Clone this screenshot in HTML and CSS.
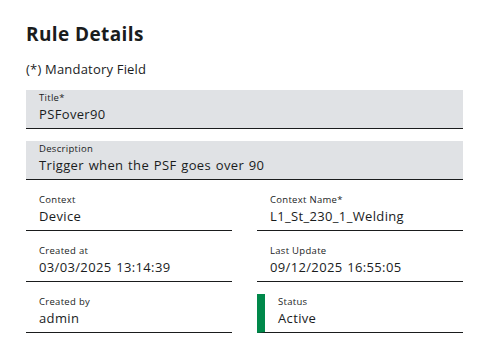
FILE: index.html
```html
<!DOCTYPE html>
<html lang="en">
<head>
    <meta charset="UTF-8">
    <meta name="viewport" content="width=device-width, initial-scale=1.0">
    <title>Rule Details</title>
    <link rel="stylesheet" href="styles.css">
</head>
<body>
    <div class="page">
        <h2>Rule Details</h2>
        <p class="hint">(*) Mandatory Field</p>

        <div class="field filled">
            <span class="label">Title*</span>
            <span class="value">PSFover90</span>
        </div>
        <div class="field filled">
            <span class="label">Description</span>
            <span class="value">Trigger when the PSF goes over 90</span>
        </div>

        <div class="grid">
            <div class="field">
                <span class="label">Context</span>
                <span class="value">Device</span>
            </div>
            <div class="field">
                <span class="label">Context Name*</span>
                <span class="value">L1_St_230_1_Welding</span>
            </div>
            <div class="field">
                <span class="label">Created at</span>
                <span class="value">03/03/2025 13:14:39</span>
            </div>
            <div class="field">
                <span class="label">Last Update</span>
                <span class="value">09/12/2025 16:55:05</span>
            </div>
            <div class="field">
                <span class="label">Created by</span>
                <span class="value">admin</span>
            </div>
            <div class="field status">
                <span class="label">Status</span>
                <span class="value">Active</span>
            </div>
        </div>
    </div>
</body>
</html>
```
FILE: styles.css
```css
/* General Styling */
body {
    margin: 0;
    font-family: "Open Sans", Arial, sans-serif;
    color: #1a1c1d;
    background: #fff;
}
.page {
    padding: 21px 25px 0 26px;
}
/* Headings */
h2 {
    margin: 0;
    font-size: 19px;
    font-weight: 700;
    line-height: 26px;
    letter-spacing: 0.4px;
}
.hint {
    margin: 13px 0 12px;
    font-size: 13px;
    line-height: 18px;
    letter-spacing: 0.2px;
}
/* Fields */
.field {
    display: flex;
    flex-direction: column;
    height: 38px;
    padding: 0 13px;
    border-bottom: 1px solid #1a1c1d;
    margin-bottom: 12px;
}
.field.filled {
    background: #e0e2e5;
}
.label {
    font-size: 9.5px;
    line-height: 12px;
    padding-top: 2px;
    letter-spacing: 0.3px;
}
.value {
    font-size: 13px;
    line-height: 20px;
    letter-spacing: 0.35px;
    word-spacing: 1px;
}
.grid {
    display: grid;
    grid-template-columns: 1fr 1fr;
    column-gap: 25px;
}
/* Status */
.field.status {
    border-left: 8px solid #00884a;
    padding-left: 13px;
}
```
